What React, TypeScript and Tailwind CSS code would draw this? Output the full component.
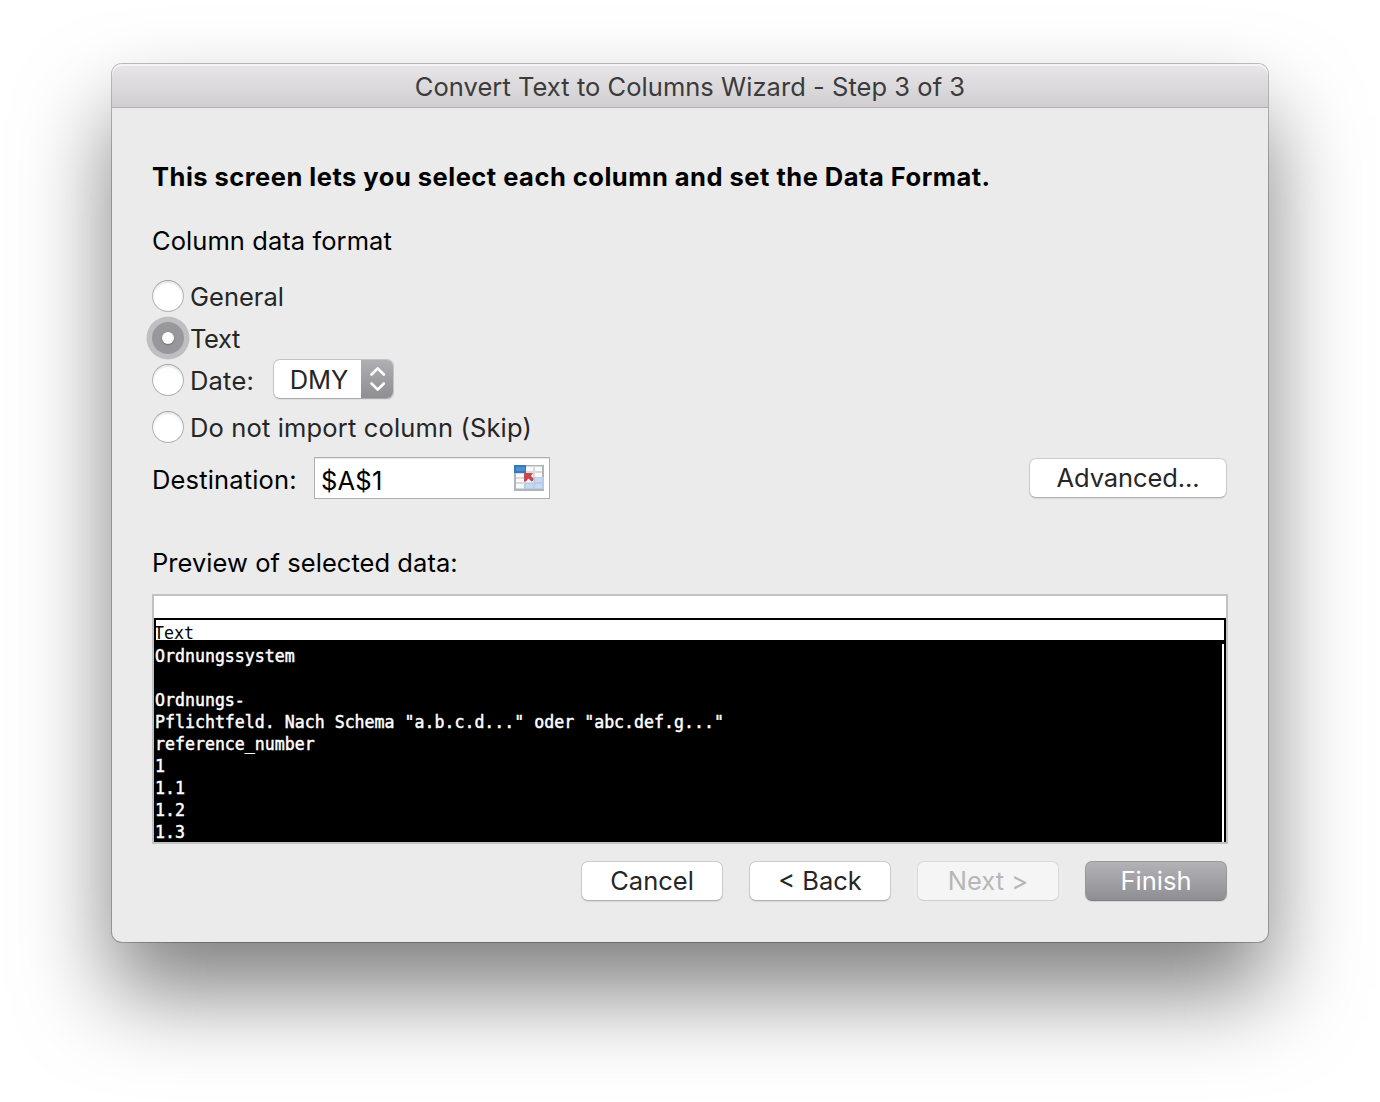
import React from "react";

const previewLines = [
  "Ordnungssystem",
  "",
  "Ordnungs-",
  'Pflichtfeld. Nach Schema "a.b.c.d..." oder "abc.def.g..."',
  "reference_number",
  "1",
  "1.1",
  "1.2",
  "1.3",
];

function Radio({ checked = false }: { checked?: boolean }) {
  if (checked) {
    return (
      <span className="flex size-8 shrink-0 items-center justify-center rounded-full bg-[#98979c] shadow-[0_0_0_5.500px_#bfbfc1]">
        <span className="size-3 rounded-full bg-white shadow-[0_1px_2px_rgba(0,0,0,0.3)]" />
      </span>
    );
  }
  return (
    <span className="size-8 shrink-0 rounded-full border border-[#b4b4b4] border-t-[#a2a2a2] bg-white shadow-[inset_0_2px_2px_rgba(0,0,0,0.1)]" />
  );
}

function Button({ children, className }: { children: React.ReactNode; className: string }) {
  return (
    <button className={`flex h-10 items-center justify-center rounded-[7px] border ${className}`}>
      {children}
    </button>
  );
}

const plain =
  "border-[#cbcbcb] border-b-[#b2b2b2] bg-white text-[#262626] shadow-[0_1px_1px_rgba(0,0,0,0.08)]";

function RangeIcon() {
  return (
    <svg width="30" height="27" viewBox="0 0 30 27" shapeRendering="crispEdges">
      <rect x="0" y="0" width="30" height="26" fill="#b1b4b8" />
      <rect x="2" y="1" width="26" height="23" fill="#d6d9dd" />
      <path d="M12 2h7v4h-7zM21 2h7v4h-7zM12 8h7v4h-7zM21 8h7v4h-7zM2 9h8v3H2zM2 14h8v3H2zM2 19h8v4H2zM12 14h7v3h-7z" fill="#fafafa" />
      <path d="M20 12h10v12H10v-6h10z" fill="#b7cce6" />
      <path d="M21 13h7v4h-7zM12 19h7v4h-7zM21 19h7v4h-7z" fill="#c8daef" />
      <rect x="0" y="0" width="12" height="8" fill="#3679bb" />
      <rect x="2" y="2" width="9" height="4" fill="#4b8fd0" />
      <path d="M10 8h9l-2 3 3 3-2.500 2.500-3-3-2.500 3H10z" fill="#c6484e" shapeRendering="auto" />
      <path d="M17 14h2v2h-2z" fill="#c6484e" />
    </svg>
  );
}

export default function App() {
  return (
    <main className="h-[1102px] w-[1380px] overflow-hidden bg-white px-28 pt-16 font-[Inter,sans-serif] text-[25.5px] leading-8 text-black">
      <div className="h-[878px] w-[1156px] rounded-[10px] bg-[#ebebeb] shadow-[0_0_0_1px_rgba(0,0,0,0.24),0_50px_90px_rgba(0,0,0,0.5)]">
        <header className="flex h-11 items-center justify-center rounded-t-[10px] border-b border-[#b1adb2] bg-linear-to-b from-[#e8e6e9] to-[#d1ced2] pt-[3px] text-[#3b3b3b] shadow-[inset_0_2px_0_#f4f3f5]">
          <span className="tracking-[0.04px]">Convert Text to Columns Wizard - Step 3 of 3</span>
        </header>

        <div className="flex flex-col items-start pr-[41px] pl-10">
          <h1 className="mt-[53px] font-bold tracking-[0.49px] whitespace-nowrap">
            This screen lets you select each column and set the Data Format.
          </h1>
          <p className="mt-8 tracking-[0.07px]">Column data format</p>

          <div className="mt-[23px] flex h-8 items-center gap-1.5 text-[#262626]">
            <Radio />
            <span className="pt-0.5">General</span>
          </div>
          <div className="mt-2.5 flex h-8 items-center gap-1.5 text-[#262626]">
            <Radio checked />
            <span className="pt-0.5 tracking-[-0.4px]">Text</span>
          </div>
          <div className="mt-2.5 flex h-8 items-center text-[#262626]">
            <Radio />
            <span className="ml-1.5 w-[83px] pt-0.5 tracking-[0.2px]">Date:</span>
            <div className="-mt-0.5 flex h-10 w-[121px] overflow-hidden rounded-[7px] border border-[#c4c4c4] border-b-[#acacac] bg-white shadow-[0_1px_1px_rgba(0,0,0,0.06)]">
              <span className="flex flex-1 items-center justify-center pt-0.5 pl-[3px]">DMY</span>
              <span className="-my-px -mr-px flex w-[33px] items-center justify-center bg-linear-to-b from-[#b0afb4] to-[#8e8d92]">
                <svg width="18" height="26" viewBox="0 0 18 26" fill="none" stroke="#fff" strokeWidth="2.6" strokeLinecap="round" strokeLinejoin="round">
                  <path d="M2.500 8.500 8.700 2.300l6.200 6.200M2.500 17.500l6.200 6.200 6.200-6.200" />
                </svg>
              </span>
            </div>
          </div>
          <div className="mt-[15px] flex h-8 items-center gap-1.5 text-[#262626]">
            <Radio />
            <span className="pt-0.5 tracking-[0.15px]">Do not import column (Skip)</span>
          </div>

          <div className="mt-3.5 flex h-[42px] w-full items-center">
            <span className="w-[162px] pt-1 tracking-[0.15px]">Destination:</span>
            <div className="flex h-[42px] w-[236px] items-center justify-between border border-[#b0b0b0] bg-white pr-[5px] pl-1.5 shadow-[inset_0_1px_0_#e8e8e8]">
              <span className="pt-1.5 tracking-[0.2px]">$A$1</span>
              <RangeIcon />
            </div>
            <Button className={`ml-auto w-[198px] tracking-[-0.1px] ${plain}`}>Advanced...</Button>
          </div>

          <p className="mt-12 tracking-[0.05px]">Preview of selected data:</p>

          <div className="mt-[15px] h-[250px] w-[1076px] overflow-hidden border-2 border-[#c2c2c2] bg-white font-['DejaVu_Sans_Mono',monospace] text-[18px] leading-[22px]">
            <div className="mt-[22px] h-[22px] border-2 border-b-0 border-black">
              <div className="-ml-0.5 w-max origin-left translate-y-[3px] scale-x-[0.921] leading-5">Text</div>
            </div>
            <div className="relative flex h-[202px] bg-black text-white">
              <div className="flex-1 pt-[5px] pl-px">
                <div className="w-max origin-left scale-x-[0.921] whitespace-pre [-webkit-text-stroke:0.5px_white]">
                  {previewLines.map((line, i) => (
                    <div key={i} className="h-[22px]">{line}</div>
                  ))}
                </div>
              </div>
              <div className="mt-1 mr-0.5 w-0.5 bg-white" />
            </div>
          </div>

          <div className="mt-[17px] flex w-full justify-end gap-[26px]">
            <Button className={`w-[142px] ${plain}`}>Cancel</Button>
            <Button className={`w-[142px] ${plain}`}>&lt; Back</Button>
            <Button className="w-[142px] border-[#d9d9d9] border-b-[#cdcdcd] bg-[#f5f5f5] text-[#b7b7b7]">Next &gt;</Button>
            <Button className="w-[142px] border-[#99989d] border-b-[#7f7e84] bg-linear-to-b from-[#b3b2b7] to-[#8f8e93] text-white shadow-[0_1px_1px_rgba(0,0,0,0.1)]">Finish</Button>
          </div>
        </div>
      </div>
    </main>
  );
}
